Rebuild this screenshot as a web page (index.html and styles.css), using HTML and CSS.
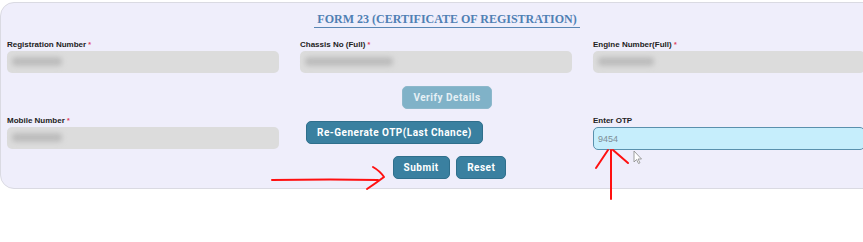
FILE: index.html
```html
<!DOCTYPE html>
<html lang="en">
<head>
  <meta charset="UTF-8">
  <title>Form 23</title>
  <link rel="stylesheet" href="styles.css">
</head>
<body>
  <div class="card">
    <div class="title"><h2>FORM 23 (CERTIFICATE OF REGISTRATION)</h2></div>

    <div class="row">
      <div class="field">
        <label>Registration Number <b>*</b></label>
        <div class="input"><span class="blur" style="width:50px"></span></div>
      </div>
      <div class="field">
        <label>Chassis No (Full) <b>*</b></label>
        <div class="input"><span class="blur" style="width:88px"></span></div>
      </div>
      <div class="field">
        <label>Engine Number(Full) <b>*</b></label>
        <div class="input"><span class="blur" style="width:56px"></span></div>
      </div>
    </div>

    <div class="center verify-row">
      <button class="btn disabled">Verify Details</button>
    </div>

    <div class="row otp-row">
      <div class="field">
        <label>Mobile Number <b>*</b></label>
        <div class="input"><span class="blur" style="width:50px"></span></div>
      </div>
      <div class="field">
        <button class="btn regen">Re-Generate OTP(Last Chance)</button>
      </div>
      <div class="field">
        <label>Enter OTP</label>
        <div class="input otp">9454</div>
      </div>
    </div>

    <div class="center actions">
      <button class="btn">Submit</button>
      <button class="btn">Reset</button>
    </div>
  </div>

  <svg class="marks" width="863" height="242" viewBox="0 0 863 242">
    <g fill="none" stroke="#ff1010" stroke-width="2" stroke-linecap="round" stroke-linejoin="round">
      <path d="M272 180 L330 179.5 L378 180"/>
      <path d="M373 167 Q380 171 384 177 Q376 183 367 189"/>
      <path d="M611 199 L611 150"/>
      <path d="M596 168 L608 150"/>
      <path d="M613 150 L628 163"/>
    </g>
    <path d="M634 151 L634 162 L636.5 159.5 L638.5 163.5 L640 162.8 L638 159 L641.5 159 Z" fill="#fff" stroke="#888" stroke-width="0.8"/>
  </svg>
</body>
</html>
```

FILE: styles.css
```css
* {
  box-sizing: border-box;
}
body {
  margin: 0;
  width: 863px;
  height: 242px;
  overflow: hidden;
  background: #fff;
  position: relative;
  font-family: "Liberation Sans", Arial, sans-serif;
}
.card {
  margin-top: 2px;
  width: 894px;
  padding: 0 6px 9px;
  background: #efeefb;
  border: 1px solid #dadae2;
  border-radius: 14px;
}
.title {
  text-align: center;
  padding-top: 6px;
}
.title h2 {
  display: inline-block;
  margin: 0;
  padding: 0 3px 1px;
  font-family: "Liberation Serif", Georgia, serif;
  font-size: 12px;
  line-height: 14px;
  color: #4f80b4;
  border-bottom: 1.5px solid #5a86b4;
}
.row {
  display: grid;
  grid-template-columns: 272px 272px 272px;
  column-gap: 21px;
  margin-top: 12px;
}
.field label {
  display: block;
  font-size: 8px;
  line-height: 10px;
  font-weight: bold;
  color: #222;
  margin-bottom: 1px;
}
.field label b {
  color: #e0405a;
  font-size: 7px;
}
.input {
  height: 22px;
  border-radius: 5px;
  background: #dcdcdc;
  padding: 6px 5px;
  font-size: 9px;
  line-height: 10px;
}
.blur {
  display: block;
  height: 9px;
  background: #bdbdbd;
  border-radius: 4px;
  filter: blur(2.5px);
}
.input.otp {
  height: 23px;
  background: #c6eefc;
  border: 1px solid #5a90ad;
  padding: 6px 4px;
  color: #7d8d96;
}
.center {
  text-align: center;
}
.verify-row {
  margin-top: 13px;
}
.btn {
  height: 23px;
  padding: 0 10px;
  border: 1px solid #2f6f8c;
  border-radius: 5px;
  background: #3a80a0;
  color: #fff;
  font-family: Roboto, "Liberation Sans", sans-serif;
  font-weight: bold;
  font-size: 10px;
  letter-spacing: 0.5px;
}
.btn.disabled {
  background: #80b2c8;
  border-color: #8db8cb;
  color: #e6f0f5;
}
.otp-row {
  margin-top: 7px;
}
.btn.regen {
  margin: 5px 0 0 6px;
}
.actions {
  margin-top: 6px;
  padding-left: 5px;
}
.actions .btn + .btn {
  margin-left: 2px;
}
.marks {
  position: absolute;
  top: 0;
  left: 0;
  pointer-events: none;
}
```
